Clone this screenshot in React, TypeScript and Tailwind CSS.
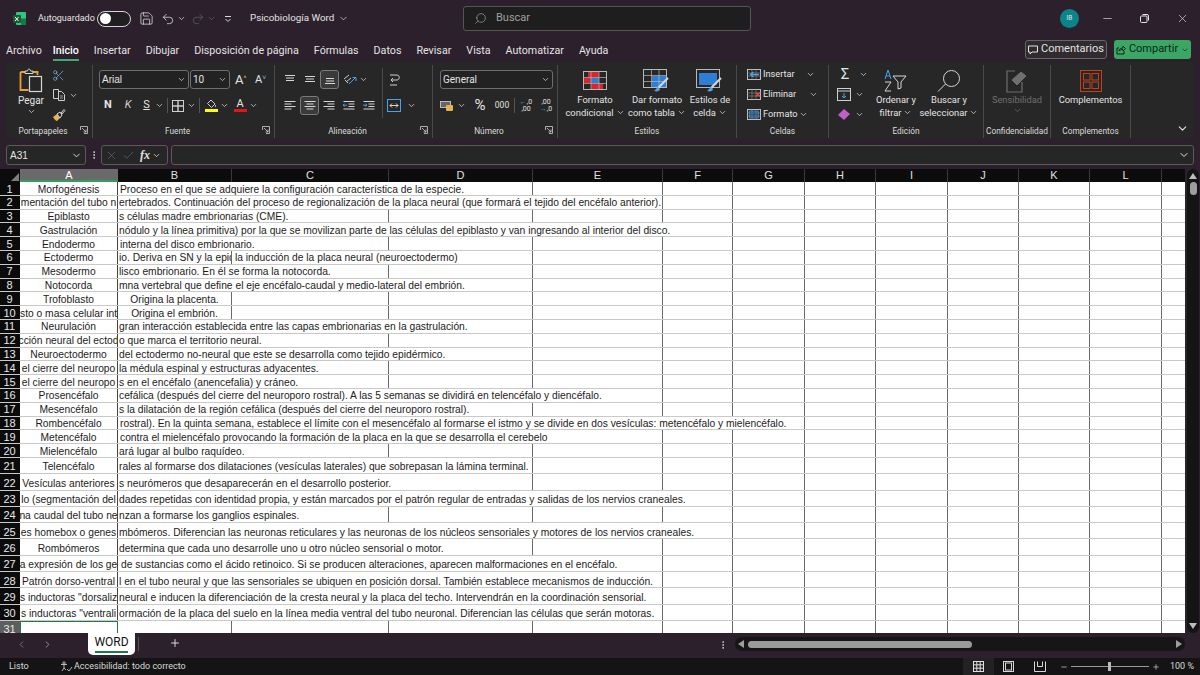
import React from "react";
import { ChevronDown, ChevronLeft, ChevronRight, Search, Minus, X, Undo2, Redo2, Save, Plus, Check, Scissors, MoreVertical } from "lucide-react";

const rows: { a: string; b: string; c?: string; center?: boolean; pl?: string }[] = [
  { a: "Morfogénesis", b: "Proceso en el que se adquiere la configuración característica de la especie.", pl: "pl-[2px]" },
  { a: "mentación del tubo n", b: "ertebrados. Continuación del proceso de regionalización de la placa neural (que formará el tejido del encéfalo anterior)." },
  { a: "Epiblasto", b: "s células madre embrionarias (CME)." },
  { a: "Gastrulación", b: "nódulo y la línea primitiva) por la que se movilizan parte de las células del epiblasto y van ingresando al interior del disco." },
  { a: "Endodermo", b: "interna del disco embrionario.", pl: "pl-[2px]" },
  { a: "Ectodermo", b: "io. Deriva en SN y la epid", c: "la inducción de la placa neural (neuroectodermo)" },
  { a: "Mesodermo", b: "lisco embrionario. En él se forma la notocorda." },
  { a: "Notocorda", b: "mna vertebral que define el eje encéfalo-caudal y medio-lateral del embrión." },
  { a: "Trofoblasto", b: "Origina la placenta.", center: true },
  { a: "sto o masa celular int", b: "Origina el embrión.", center: true },
  { a: "Neurulación", b: "gran interacción establecida entre las capas embrionarias en la gastrulación." },
  { a: "cción neural del ectod", b: "o que marca el territorio neural." },
  { a: "Neuroectodermo", b: "del ectodermo no-neural que este se desarrolla como tejido epidérmico." },
  { a: "el cierre del neuropo", b: "la médula espinal y estructuras adyacentes." },
  { a: "el cierre del neuropo", b: "s en el encéfalo (anencefalia) y cráneo." },
  { a: "Prosencéfalo", b: "cefálica (después del cierre del neuroporo rostral). A las 5 semanas se dividirá en telencéfalo y diencéfalo." },
  { a: "Mesencéfalo", b: "s la dilatación de la región cefálica (después del cierre del neuroporo rostral)." },
  { a: "Rombencéfalo", b: "rostral). En la quinta semana, establece el límite con el mesencéfalo al formarse el istmo y se divide en dos vesículas: metencéfalo y mielencéfalo.", pl: "pl-[2px]" },
  { a: "Metencéfalo", b: "contra el mielencéfalo provocando la formación de la placa en la que se desarrolla el cerebelo", pl: "pl-[2px]" },
  { a: "Mielencéfalo", b: "ará lugar al bulbo raquídeo." },
  { a: "Telencéfalo", b: "rales al formarse dos dilataciones (vesículas laterales) que sobrepasan la lámina terminal." },
  { a: "Vesículas anteriores", b: "s neurómeros que desaparecerán en el desarrollo posterior." },
  { a: "lo (segmentación del", b: "dades repetidas con identidad propia, y están marcados por el patrón regular de entradas y salidas de los nervios craneales." },
  { a: "na caudal del tubo ne", b: "nzan a formarse los ganglios espinales." },
  { a: "es homebox o genes", b: "mbómeros. Diferencian las neuronas reticulares y las neuronas de los núcleos sensoriales y motores de los nervios craneales." },
  { a: "Rombómeros", b: "determina que cada uno desarrolle uno u otro núcleo sensorial o motor." },
  { a: "a expresión de los ge", b: "de sustancias como el ácido retinoico. Si se producen alteraciones, aparecen malformaciones en el encéfalo.", pl: "pl-[3px]" },
  { a: "Patrón dorso-ventral", b: "l en el tubo neural y que las sensoriales se ubiquen en posición dorsal. También establece mecanismos de inducción." },
  { a: "s inductoras \"dorsaliz", b: "neural e inducen la diferenciación de la cresta neural y la placa del techo. Intervendrán en la coordinación sensorial." },
  { a: "s inductoras \"ventrali", b: "ormación de la placa del suelo en la línea media ventral del tubo neuronal. Diferencian las células que serán motoras." },
];

const columns: [string, string][] = [
  ["B", "w-[114px]"], ["C", "w-[157px]"], ["D", "w-[144px]"], ["E", "w-[130px]"], ["F", "w-[70px]"], ["G", "w-[72px]"],
  ["H", "w-[71px]"], ["I", "w-[72px]"], ["J", "w-[71px]"], ["K", "w-[71px]"], ["L", "w-[72px]"],
];
const restCols = columns.slice(2);

const ui = { fontFamily: 'Roboto, "Open Sans", sans-serif' };

function Chev({ className = "" }: { className?: string }) {
  return <ChevronDown size={9} strokeWidth={2} className={"text-[#d8d8d8] shrink-0 " + className} />;
}

function Launcher() {
  return (
    <svg width="8" height="8" viewBox="0 0 8 8" className="absolute right-[4px] bottom-[4px]" fill="none" stroke="#cfcfcf" strokeWidth="0.8">
      <path d="M.5 4V.5H7.5V7.5H4" /><path d="M2 2l4 4M6 3.500V6H3.500" />
    </svg>
  );
}

function Group({ w, label, launcher, children }: { w: string; label: string; launcher?: boolean; children: React.ReactNode }) {
  return (
    <div className={"relative h-full flex flex-col border-r border-[#4a4a4a] shrink-0 " + w}>
      <div className="flex-1 flex min-h-0">{children}</div>
      <div className={"h-[14px] text-center text-[8.300px] leading-[15px] text-[#dcdcdc] whitespace-nowrap shrink-0 " + (launcher ? "pr-[12px]" : "")}>{label}</div>
      {launcher && <Launcher />}
    </div>
  );
}

function AlignIcon({ kind }: { kind: "top" | "mid" | "bot" | "l" | "c" | "r" | "in" | "out" }) {
  const L: Record<string, string> = {
    top: "M2 2.500h10M3 5h8M3 7.500h8",
    mid: "M2 3.500h10M3 6h8M2 8.500h10",
    bot: "M3 5.500h8M3 8h8M2 10.500h10",
    l: "M1.500 2.500h11M1.500 5h7M1.500 7.500h11M1.500 10h7",
    c: "M1.500 2.500h11M3.500 5h7M1.500 7.500h11M3.500 10h7",
    r: "M1.500 2.500h11M5.500 5h7M1.500 7.500h11M5.500 10h7",
    in: "M1.500 2.500h11M6.500 5h6M6.500 7.500h6M1.500 10h11",
    out: "M1.500 2.500h11M6.500 5h6M6.500 7.500h6M1.500 10h11",
  };
  return (
    <svg width="14" height="13" viewBox="0 0 14 13" fill="none" stroke="#d6d6d6" strokeWidth="1">
      <path d={L[kind]} />
      {kind === "in" && <path d="M1 6.200h4M3.500 5L5 6.200 3.500 7.500" stroke="#4aa3e8" />}
      {kind === "out" && <path d="M5 6.200H1M2.500 5L1 6.200l1.500 1.300" stroke="#4aa3e8" />}
    </svg>
  );
}

function Paste() {
  return (
    <svg width="24" height="26" viewBox="0 0 24 26" fill="none">
      <path d="M1.500 5H6M14 5h4.500v3M1.500 5v18h8" stroke="#e8a03c" strokeWidth="1.800" />
      <path d="M6 6.500V4h2.500c0-2.500 3-2.500 3 0H14v2.500z" stroke="#d6d6d6" />
      <rect x="10.500" y="9.500" width="12" height="15" stroke="#d6d6d6" strokeWidth="1.200" fill="#272727" />
    </svg>
  );
}

function CopyIcon() {
  return (
    <svg width="14" height="14" viewBox="0 0 14 14" fill="none" stroke="#cfcfcf">
      <path d="M1.500 1.500h5v9h-5z" /><path d="M6.500 3.500h3l3 3v6h-6v-9z" fill="#272727" /><path d="M8 8h3M8 10h3" strokeWidth=".7" />
    </svg>
  );
}

function PainterIcon() {
  return (
    <svg width="14" height="14" viewBox="0 0 14 14" fill="none">
      <path d="M1 9l4-3 3 4-3 3c-1 0-3-2-4-4z" fill="#e5b350" />
      <path d="M5 6l3-2 2 3-2 3zM9 5l3-3.500 1 1-3 3.500z" stroke="#d6d6d6" />
    </svg>
  );
}

function MatrixIcon() {
  return (
    <svg width="14" height="14" viewBox="0 0 14 14" fill="none" stroke="#cfcfcf">
      <rect x="1.500" y="1.500" width="11" height="11" />
      <path d="M1.500 7h11M7 1.500v11" strokeWidth="1.400" />
    </svg>
  );
}

function CondFormat() {
  return (
    <svg width="24" height="20" viewBox="0 0 24 20">
      <rect x=".5" y=".5" width="23" height="18" fill="#272727" stroke="#b8b8b8" />
      <rect x="5" y="1" width="11" height="5.500" fill="#d8262c" />
      <rect x="1" y="7" width="7" height="5" fill="#d8262c" />
      <rect x="8" y="7" width="8" height="5" fill="#2d7fd6" />
      <rect x="8" y="12.500" width="12" height="5.500" fill="#d8262c" />
      <path d="M.5 6.500h23M.5 12.500h23M8 .5v18M16 .5v18" stroke="#b8b8b8" strokeWidth=".7" />
    </svg>
  );
}

function TableFormat({ cell = false }: { cell?: boolean }) {
  return (
    <svg width="28" height="24" viewBox="0 0 28 24" fill="none">
      <rect x=".5" y=".5" width="23" height="18" stroke="#b8b8b8" fill="#272727" />
      {cell ? <rect x="3" y="4" width="18" height="12" fill="#2d7fd6" /> : <rect x="9" y="7" width="14" height="11" fill="#2d7fd6" />}
      {!cell && <path d="M.5 6.500h23M.5 12.500h23M8.500.5v18M16 .5v18" stroke="#b8b8b8" strokeWidth=".7" />}
      <path d="M25 9L15 19" stroke="#d6d6d6" strokeWidth="2.200" />
      <path d="M15 18c-2 1-2 3-4 4 3 1 6 0 6-2z" fill="#5aa0dc" />
    </svg>
  );
}

function CellIcon({ kind }: { kind: "ins" | "del" | "fmt" }) {
  return (
    <svg width="14" height="13" viewBox="0 0 14 13" fill="none">
      <rect x=".5" y="1.500" width="13" height="10" stroke="#cfcfcf" strokeWidth=".9" />
      <path d="M.5 5h13M.5 8h13M5 1.500v10M9 1.500v10" stroke="#8f8f8f" strokeWidth=".6" />
      {kind === "ins" && <path d="M4 6.500h8M6.500 4L3.500 6.500 6.500 9" stroke="#4aa3e8" strokeWidth="1.300" />}
      {kind === "del" && <path d="M9 4.500l4 4M13 4.500l-4 4" stroke="#e5483f" strokeWidth="1.300" />}
      {kind === "fmt" && <rect x="2.500" y="3" width="9" height="7" fill="#2d7fd6" fillOpacity=".45" stroke="#4aa3e8" strokeWidth=".6" />}
    </svg>
  );
}

function SmallBtn({ icon, label, chev }: { icon: React.ReactNode; label: string; chev: string }) {
  return (
    <div className="h-[20px] flex items-center shrink-0">
      <span className="w-[14px] flex justify-center shrink-0">{icon}</span>
      <span className="ml-[2px] w-[35px] text-[9.200px] text-[#e4e4e4] leading-none whitespace-nowrap">{label}</span>
      <Chev className={chev} />
    </div>
  );
}

function LargeBtn({ w, icon, l1, l2, chev = true }: { w: string; icon: React.ReactNode; l1: string; l2: string; chev?: boolean }) {
  return (
    <div className={"flex flex-col items-center shrink-0 " + w}>
      <div className="h-[28px] flex items-center justify-center pt-[4px] shrink-0">{icon}</div>
      <div className="text-[9.400px] leading-[13px] text-[#e4e4e4] whitespace-nowrap text-center shrink-0">{l1}</div>
      <div className="text-[9.400px] leading-[13px] text-[#e4e4e4] whitespace-nowrap flex items-center gap-[2px] shrink-0">{l2}{chev && <Chev />}</div>
    </div>
  );
}

function Ribbon() {
  return (
    <div className="mx-[6px] h-[77px] bg-[#272727] rounded-[5px] flex text-[#e4e4e4] pt-[3px] pb-[1px]">
      <Group w="w-[87px]" label="Portapapeles" launcher>
        <div className="w-[50px] flex flex-col items-center shrink-0">
          <div className="h-[28px] flex items-end shrink-0"><Paste /></div>
          <div className="text-[10px] leading-[13px] mt-[1px] shrink-0">Pegar</div>
          <Chev />
        </div>
        <div className="flex flex-col -ml-[4px]">
          <div className="h-[20px] flex items-center shrink-0"><Scissors size={13} color="#7fb3e0" strokeWidth={1.300} /></div>
          <div className="h-[20px] flex items-center gap-[3px] shrink-0"><CopyIcon /><Chev /></div>
          <div className="h-[20px] flex items-center shrink-0"><PainterIcon /></div>
        </div>
      </Group>

      <Group w="w-[182px]" label="Fuente" launcher>
        <div className="flex flex-col pl-[6px]">
          <div className="flex items-center h-[25px] pt-[4px] shrink-0">
            <div className="w-[90px] h-[19px] rounded-[3px] border border-[#6e6e6e] bg-[#222] flex items-center justify-between px-[2px] text-[10px]" style={{ fontFamily: '"Liberation Sans", sans-serif' }}>Arial<Chev /></div>
            <div className="ml-[1px] w-[40px] h-[19px] rounded-[3px] border border-[#6e6e6e] bg-[#222] flex items-center justify-between px-[2px] text-[10px]">10<Chev /></div>
            <span className="ml-[5px] text-[13px] leading-none w-[20px]">A<sup className="text-[7px] text-[#bbb]">^</sup></span>
            <span className="text-[11px] leading-none w-[16px]">A<sup className="text-[7px] text-[#7fb3e0]">˅</sup></span>
          </div>
          <div className="flex items-center h-[31px] text-[11px] shrink-0">
            <span className="w-[20px] ml-[-1px] text-center font-bold">N</span>
            <span className="w-[20px] text-center italic text-[#d0d0d0]">K</span>
            <span className="w-[17px] text-center underline">S</span>
            <Chev />
            <span className="w-px h-[15px] bg-[#555] ml-[3px] mr-[3px]" />
            <MatrixIcon />
            <Chev className="ml-[2px]" />
            <span className="w-px h-[15px] bg-[#555] ml-[3px] mr-[4px]" />
            <span className="w-[14px] flex flex-col items-center">
              <svg width="11" height="10" viewBox="0 0 11 10" fill="none" stroke="#cfcfcf"><path d="M5 1l4 4-3.500 3.500-4-4z" /><path d="M9.500 6v2" stroke="#7fb3e0" /></svg>
              <span className="w-[13px] h-[3px] bg-[#ffff00]" />
            </span>
            <Chev className="ml-[2px]" />
            <span className="w-[14px] ml-[4px] flex flex-col items-center text-[11px] leading-[10px]">A<span className="w-[13px] h-[3px] bg-[#e8121c]" /></span>
            <Chev className="ml-[2px]" />
          </div>
        </div>
      </Group>

      <Group w="w-[158px]" label="Alineación" launcher>
        <div className="flex flex-col pl-[8px]">
          <div className="flex items-center h-[25px] pt-[4px] gap-[6px] shrink-0">
            <AlignIcon kind="top" /><AlignIcon kind="mid" />
            <span className="w-[19px] h-[19px] -ml-[3px] flex items-center justify-center rounded-[3px] border border-[#7a7a7a] bg-[#3a3a3a]"><AlignIcon kind="bot" /></span>
            <svg width="14" height="14" viewBox="0 0 14 14" fill="none" className="-ml-[2px]"><path d="M1 6l5-4M3 9l5-4M2 7l3 3" stroke="#cfcfcf" /><path d="M6 11l6-6M9.500 4.500H13V8" stroke="#4aa3e8" /></svg>
            <Chev className="-ml-[4px]" />
          </div>
          <div className="flex items-center h-[31px] gap-[6px] shrink-0">
            <AlignIcon kind="l" />
            <span className="w-[19px] h-[19px] -mx-[3px] flex items-center justify-center rounded-[3px] border border-[#7a7a7a] bg-[#3a3a3a]"><AlignIcon kind="c" /></span>
            <AlignIcon kind="r" /><AlignIcon kind="out" /><AlignIcon kind="in" />
          </div>
        </div>
        <span className="w-px h-[50px] bg-[#4a4a4a] ml-[6px] mt-[3px]" />
        <div className="flex flex-col pl-[4px]">
          <div className="h-[25px] flex items-center pt-[4px] shrink-0">
            <svg width="14" height="14" viewBox="0 0 14 14" fill="none" stroke="#cfcfcf"><path d="M3 2h7c3 0 3 5 0 5H5M6 5L4 7l2 2" /><path d="M3 12h7" /></svg>
          </div>
          <div className="h-[31px] flex items-center gap-[6px] shrink-0">
            <svg width="14" height="13" viewBox="0 0 14 13" fill="none"><rect x=".5" y=".5" width="13" height="12" stroke="#4aa3e8" /><path d="M3 6.500h8M9 4.500l2 2-2 2M5 4.500l-2 2 2 2" stroke="#d6d6d6" /></svg>
            <Chev />
          </div>
        </div>
      </Group>

      <Group w="w-[125px]" label="Número" launcher>
        <div className="flex flex-col pl-[7px]">
          <div className="flex items-center h-[25px] pt-[4px] shrink-0">
            <div className="w-[113px] h-[19px] rounded-[3px] border border-[#6e6e6e] bg-[#222] flex items-center justify-between px-[2px] text-[10px]">General<Chev /></div>
          </div>
          <div className="flex items-center h-[31px] shrink-0">
            <svg width="14" height="12" viewBox="0 0 14 12" fill="none"><rect x=".5" y="1.500" width="10" height="6" fill="#666" stroke="#bbb" /><rect x="6" y="5" width="7" height="6" rx="1" fill="#e5b350" /></svg>
            <Chev className="ml-[3px]" />
            <span className="ml-[6px] text-[15px] leading-none w-[16px] text-center">%</span>
            <span className="ml-[5px] text-[8.500px] leading-none w-[18px] text-center">000</span>
            <span className="w-px h-[15px] bg-[#555] ml-[3px] mr-[4px]" />
            <span className="w-[14px] text-[7px] leading-[7px] text-center"><span className="text-[#4aa3e8]">←</span>,0<br />,00</span>
            <span className="w-[14px] ml-[6px] text-[7px] leading-[7px] text-center">,00<br /><span className="text-[#4aa3e8]">→</span>,0</span>
          </div>
        </div>
      </Group>

      <Group w="w-[179px]" label="Estilos">
        <LargeBtn w="w-[74px]" icon={<CondFormat />} l1="Formato" l2="condicional" />
        <LargeBtn w="w-[50px]" icon={<TableFormat />} l1="Dar formato" l2="como tabla" />
        <LargeBtn w="w-[56px]" icon={<TableFormat cell />} l1="Estilos de" l2="celda" />
      </Group>

      <Group w="w-[92px]" label="Celdas">
        <div className="flex flex-col pl-[10px] -mt-[1px]">
          <SmallBtn icon={<CellIcon kind="ins" />} label="Insertar" chev="ml-[8px]" />
          <SmallBtn icon={<CellIcon kind="del" />} label="Eliminar" chev="ml-[11px]" />
          <SmallBtn icon={<CellIcon kind="fmt" />} label="Formato" chev="ml-[1px]" />
        </div>
      </Group>

      <Group w="w-[155px]" label="Edición">
        <div className="flex flex-col pl-[8px] w-[43px] shrink-0 -mt-[1px]">
          <div className="h-[20px] flex items-center text-[15px] leading-none shrink-0"><span className="w-[16px] text-center">Σ</span><Chev className="ml-[6px]" /></div>
          <div className="h-[20px] flex items-center shrink-0">
            <svg width="14" height="13" viewBox="0 0 14 13" fill="none"><rect x=".5" y=".5" width="13" height="12" stroke="#cfcfcf" /><path d="M.5 3h13" stroke="#cfcfcf" /><path d="M7 5v5M5 8l2 2 2-2" stroke="#4aa3e8" /></svg>
            <Chev className="ml-[4px]" />
          </div>
          <div className="h-[20px] flex items-center shrink-0">
            <svg width="14" height="13" viewBox="0 0 14 13"><path d="M1 7l6-6 6 5-6 6z" fill="#c15fc9" /></svg>
            <Chev className="ml-[4px]" />
          </div>
        </div>
        <LargeBtn w="w-[48px]" icon={<svg width="24" height="24" viewBox="0 0 24 24" fill="none"><path d="M1 10l3-9 3 9M2 7h4" stroke="#4aa3e8" /><path d="M1 13h6l-6 9h6" stroke="#d6d6d6" /><path d="M9 7h13l-5 6v6l-3 1v-7z" stroke="#d6d6d6" /></svg>} l1="Ordenar y" l2="filtrar" />
        <LargeBtn w="w-[58px]" icon={<svg width="24" height="24" viewBox="0 0 24 24" fill="none" stroke="#d6d6d6"><circle cx="14.500" cy="9.500" r="8" /><path d="M8.500 15L1 22.500" /></svg>} l1="Buscar y" l2="seleccionar" />
      </Group>

      <Group w="w-[67px]" label="Confidencialidad">
        <div className="flex flex-col items-center w-full text-[#6f6f6f]">
          <div className="h-[28px] flex items-center pt-[4px] shrink-0">
            <svg width="22" height="23" viewBox="0 0 22 23" fill="none" stroke="#6f6f6f"><path d="M9 1H1v21h15V12" strokeWidth="1.200" /><path d="M6 10l9-8 5 4-9 9z" fill="#6f6f6f" /></svg>
          </div>
          <div className="text-[9.300px] leading-[13px] shrink-0">Sensibilidad</div>
          <ChevronDown size={9} strokeWidth={2} className="shrink-0" />
        </div>
      </Group>

      <Group w="w-[80px]" label="Complementos">
        <div className="flex flex-col items-center w-full">
          <div className="h-[28px] flex items-center pt-[4px] shrink-0">
            <svg width="22" height="22" viewBox="0 0 22 22" fill="none" stroke="#c4401c"><rect x=".5" y=".5" width="21" height="21" /><rect x="3.500" y="3.500" width="6.500" height="6.500" /><rect x="12" y="3.500" width="6.500" height="6.500" /><rect x="3.500" y="12" width="6.500" height="6.500" /><rect x="12" y="12" width="6.500" height="6.500" /></svg>
          </div>
          <div className="text-[9.400px] leading-[13px] shrink-0">Complementos</div>
        </div>
      </Group>

      <div className="flex-1 flex items-end justify-end pr-[5px] pb-[3px]"><ChevronDown size={13} color="#e4e4e4" /></div>
    </div>
  );
}

function TitleBar() {
  return (
    <div className="h-[37px] flex items-center text-[#e4e4e4]">
      <div className="w-[38px] flex justify-center shrink-0">
        <svg width="13" height="13" viewBox="0 0 13 13"><rect x="3" y="0" width="10" height="13" rx="1" fill="#33c481" /><rect x="8" y="6.500" width="5" height="6.500" fill="#107c41" /><rect x="0" y="3" width="8" height="8" rx="1" fill="#185c37" /><path d="M2 5l3.500 4M5.500 5L2 9" stroke="#fff" /></svg>
      </div>
      <span className="text-[9px] w-[59px] shrink-0 whitespace-nowrap">Autoguardado</span>
      <div className="w-[34px] h-[16px] rounded-full border border-[#d6d6d6] bg-[#1f1f1f] flex items-center px-[2px] shrink-0">
        <span className="w-[11px] h-[11px] rounded-full bg-white" />
      </div>
      <Save size={15} strokeWidth={1.200} className="ml-[8px] shrink-0" />
      <Undo2 size={14} strokeWidth={1.300} className="ml-[7px] shrink-0" />
      <Chev className="ml-[2px]" />
      <Redo2 size={14} strokeWidth={1.200} color="#666" className="ml-[5px] shrink-0" />
      <ChevronDown size={9} color="#666" className="ml-[2px] shrink-0" />
      <svg width="8" height="8" viewBox="0 0 8 8" className="ml-[8px] shrink-0" fill="none" stroke="#d8d8d8"><path d="M1 1.500h6M1.500 4l2.500 2.500L6.500 4" /></svg>
      <span className="ml-[18px] text-[9.800px] w-[97px] shrink-0 flex items-center gap-[4px] whitespace-nowrap">Psicobiología&nbsp;Word <ChevronDown size={11} strokeWidth={1.500} className="shrink-0" /></span>
      <div className="ml-[116px] w-[288px] h-[25px] rounded-[3px] border border-[#555] bg-[#1e1e1e] flex items-center shrink-0 pl-[10px]">
        <Search size={13} strokeWidth={1.200} color="#a8a8a8" className="-scale-x-100" />
        <span className="ml-[9px] text-[11px] text-[#a0a0a0]">Buscar</span>
      </div>
      <div className="ml-[309px] w-[19px] h-[19px] rounded-full bg-[#0b858c] flex items-center justify-center text-[6.500px] shrink-0">IB</div>
      <Minus size={13} strokeWidth={1.200} className="ml-[22px] shrink-0" />
      <svg width="11" height="11" viewBox="0 0 11 11" className="ml-[25px] shrink-0" fill="none" stroke="#e4e4e4"><rect x="1.500" y="3" width="6.500" height="6.500" rx="1" /><path d="M3.500 1.500h4.500a1.500 1.500 0 0 1 1.500 1.500V7.500" /></svg>
      <X size={13} strokeWidth={1.200} className="ml-[26px] shrink-0" />
    </div>
  );
}

function Tabs() {
  const tabs = ["Archivo", "Inicio", "Insertar", "Dibujar", "Disposición de página", "Fórmulas", "Datos", "Revisar", "Vista", "Automatizar", "Ayuda"];
  return (
    <div className="h-[25px] flex items-center pl-[6px] pr-[9px] text-[#e4e4e4]">
      <div className="flex gap-[15px] text-[10.700px] flex-1 pt-[3px]">
        {tabs.map((t) => (
          <span key={t} className={t === "Inicio" ? "relative font-medium text-white -ml-[4px]" : ""}>
            {t}
            {t === "Inicio" && <span className="absolute left-0 right-0 -bottom-[2px] h-[2px] bg-[#3fae6c]" />}
          </span>
        ))}
      </div>
      <div className="w-[82px] h-[19px] rounded-[3px] border border-[#666] bg-[#2f2b2f] flex items-center justify-center gap-[3px] text-[11px]">
        <svg width="10" height="10" viewBox="0 0 10 10" fill="none" stroke="#e4e4e4"><path d="M.5 1h9v6H4L2 9V7H.5z" /></svg>
        Comentarios
      </div>
      <div className="ml-[7px] w-[77px] h-[19px] rounded-[3px] bg-[#3aa864] text-[#10231a] flex items-center justify-center gap-[3px] text-[11px]">
        <svg width="10" height="10" viewBox="0 0 10 10" fill="none" stroke="#10231a"><path d="M8 6v3H1V3h2M3 6c0-2 2-3 4-3V1l2.500 2.500L7 6V4.500C5 4.500 4 5 3 6z" /></svg>
        Compartir
        <ChevronDown size={8} />
      </div>
    </div>
  );
}

function FormulaBar() {
  return (
    <div className="h-[20px] mt-[6px] mx-[6px] flex items-stretch text-[#e4e4e4]">
      <div className="w-[80px] rounded-[3px] border border-[#5a5a5a] bg-[#262626] flex items-center justify-between pl-[3px] pr-[3px] text-[10px]" style={{ fontFamily: '"Liberation Sans", sans-serif' }}>A31<ChevronDown size={11} /></div>
      <div className="w-[15px] flex items-center justify-center"><MoreVertical size={10} /></div>
      <div className="w-[67px] rounded-[3px] border border-[#5a5a5a] bg-[#262626] flex items-center pl-[3px] gap-[4px]">
        <X size={13} strokeWidth={1} color="#777" />
        <Check size={13} strokeWidth={1} color="#777" />
        <span className="ml-[1px] italic font-bold text-[12px] leading-none" style={{ fontFamily: '"Liberation Serif", serif' }}>fx</span>
        <ChevronDown size={9} className="-ml-[2px]" />
      </div>
      <div className="ml-[3px] flex-1 rounded-[3px] border border-[#5a5a5a] bg-[#262626] flex items-center justify-end pr-[3px]"><ChevronDown size={12} /></div>
    </div>
  );
}

function Cell({ w, children, className = "" }: { w: string; children?: React.ReactNode; className?: string }) {
  return <div className={"h-full shrink-0 border-r box-border " + w + " " + className}>{children}</div>;
}

function Row({ n, r, i }: { n: number; r: (typeof rows)[number]; i: number }) {
  const short = i < 20;
  const pad = short ? "pt-[1.500px]" : "pt-[3.500px]";
  const fill = short ? "h-[12.800px]" : "h-[15.300px]";
  const text = "relative z-10 bg-white whitespace-nowrap leading-[11px] block w-max " + pad + " " + fill;
  return (
    <div className={"flex shrink-0 border-b border-[#c9c9c9] box-border " + (short ? "h-[13.800px]" : "h-[16.300px]")}>
      <div className={"w-[20px] shrink-0 bg-[#0b0b0b] text-[#e8e8e8] text-center text-[11px] leading-[11px] pr-[1px] relative z-20 " + pad}>{n}</div>
      <Cell w="w-[98px]" className={"overflow-hidden flex justify-center border-[#444] " + pad}><span className="shrink-0 whitespace-nowrap leading-[11px]">{r.a}</span></Cell>
      <Cell w="w-[114px]" className={"border-[#6a6a6a]" + (r.c ? " overflow-hidden" : "")}>
        {r.center
          ? <span className={"block text-center leading-[11px] whitespace-nowrap " + pad}>{r.b}</span>
          : <span className={text + " " + (r.pl ?? "pl-[1px]")}>{r.b}</span>}
      </Cell>
      <Cell w="w-[157px]" className="border-[#6a6a6a]">{r.c && <span className={text + " pl-[3px]"}>{r.c}</span>}</Cell>
      {restCols.map(([k, w]) => <Cell key={k} w={w} className="border-[#6a6a6a]" />)}
      <div className="w-[23px] shrink-0" />
    </div>
  );
}

function Sheet() {
  return (
    <div className="mt-[4px] h-[464px] flex overflow-hidden text-[10.280px] text-[#1b1b1b]" style={{ fontFamily: '"Liberation Sans", sans-serif' }}>
      <div className="w-[1185px] shrink-0 bg-white flex flex-col">
        <div className="h-[13px] flex bg-[#0c0c0c] text-[#e0e0e0] text-[11px] shrink-0">
          <div className="w-[20px] shrink-0 flex items-end justify-end pr-[1px] pb-[1px]">
            <svg width="8" height="8" viewBox="0 0 8 8"><path d="M8 0v8H0z" fill="#7d7d7d" /></svg>
          </div>
          <div className="w-[98px] shrink-0 bg-[#6a6a6a] border-b-2 border-[#2f9e5f] text-center leading-[12px] text-white">A</div>
          {columns.map(([k, w]) => (
            <div key={k} className={"shrink-0 text-center leading-[13px] border-r border-[#3a3a3a] " + w}>{k}</div>
          ))}
        </div>
        {rows.map((r, i) => <Row key={i} n={i + 1} r={r} i={i} />)}
        <div className="flex flex-1 min-h-0">
          <div className="w-[20px] shrink-0 bg-[#5e5e5e] text-[#e8e8e8] text-center text-[11px] leading-[16px] pr-[1px]">31</div>
          <div className="w-[98px] shrink-0 h-[14px] border-x-[1.500px] border-t-[1.500px] border-[#1f7a45]" />
          <Cell w="w-[114px]" className="border-[#6a6a6a]" />
          <Cell w="w-[157px]" className="border-[#6a6a6a]" />
          {restCols.map(([k, w]) => <Cell key={k} w={w} className="border-[#6a6a6a]" />)}
        </div>
      </div>
      <div className="flex-1 pl-[2px] pr-[1px] bg-[#2b202b]">
        <div className="h-full bg-[#141414] rounded-full flex flex-col items-center justify-between py-[4px]">
          <div className="flex flex-col items-center">
            <svg width="8" height="6" viewBox="0 0 8 6"><path d="M4 0l4 6H0z" fill="#bdbdbd" /></svg>
            <span className="w-[7px] h-[13px] rounded-full bg-[#9e9e9e] mt-[3px]" />
          </div>
          <svg width="8" height="6" viewBox="0 0 8 6"><path d="M4 6L0 0h8z" fill="#bdbdbd" /></svg>
        </div>
      </div>
    </div>
  );
}

function SheetTabs() {
  return (
    <div className="h-[25px] flex text-[#d8d8d8]">
      <div className="w-[88px] flex items-center pl-[16px] gap-[15px] shrink-0 pb-[3px]">
        <ChevronLeft size={11} color="#777" /><ChevronRight size={11} color="#999" />
      </div>
      <div className="w-[47px] h-[22px] bg-white rounded-b-[5px] text-[#111] text-[12px] flex flex-col items-center shrink-0 pt-[2px] leading-[15px]">
        <span>WORD</span>
        <span className="w-[33px] h-[1.500px] bg-[#1f7a45] mt-[1px]" />
      </div>
      <span className="w-px h-[14px] bg-[#555] ml-[3px] mt-[4px]" />
      <Plus size={12} className="ml-[30px] mt-[4px]" />
      <MoreVertical size={10} className="ml-[537px] mt-[7px]" />
      <div className="ml-[7px] mt-[4px] w-[450px] h-[14px] rounded-full bg-[#161616] flex items-center px-[3px]">
        <svg width="6" height="8" viewBox="0 0 6 8"><path d="M0 4l6-4v8z" fill="#9e9e9e" /></svg>
        <span className="ml-[4px] w-[224px] h-[7px] rounded-full bg-[#9a9a9a]" />
        <span className="flex-1" />
        <svg width="6" height="8" viewBox="0 0 6 8"><path d="M6 4L0 0v8z" fill="#9e9e9e" /></svg>
      </div>
    </div>
  );
}

function StatusBar() {
  return (
    <div className="h-[17px] bg-[#141414] flex items-center text-[9px] text-[#d8d8d8] pl-[9px]">
      <span className="w-[51px] shrink-0">Listo</span>
      <svg width="13" height="12" viewBox="0 0 13 12" fill="none" stroke="#d8d8d8" strokeWidth=".8" className="shrink-0"><circle cx="4" cy="2" r="1.200" /><path d="M1 3.500h6M4 4v3l-2 3M4 7l2 2M7 8l2 2 3-4" /></svg>
      <span className="ml-[1px] whitespace-nowrap">Accesibilidad: todo correcto</span>
      <span className="flex-1" />
      <div className="w-[31px] h-full bg-[#222] flex items-center justify-center shrink-0 mr-[-1px]">
        <svg width="11" height="11" viewBox="0 0 11 11" fill="none" stroke="#e0e0e0"><rect x=".5" y=".5" width="10" height="10" /><path d="M.5 3.800h10M.5 7.200h10M3.800.5v10M7.200.5v10" /></svg>
      </div>
      <svg width="11" height="11" viewBox="0 0 11 11" fill="none" stroke="#d8d8d8" className="ml-[10px] shrink-0"><rect x=".5" y=".5" width="10" height="10" /><rect x="2.500" y="2" width="6" height="7" /></svg>
      <svg width="12" height="11" viewBox="0 0 12 11" fill="none" stroke="#d8d8d8" className="ml-[20px] shrink-0"><path d="M.5 .5v10h11V.5M3.500 .5v5h5V.5" /></svg>
      <Minus size={8} className="ml-[14px] shrink-0" />
      <div className="ml-[3px] w-[78px] h-[1px] bg-[#999] relative shrink-0">
        <span className="absolute left-[37px] -top-[4px] w-[3px] h-[9px] bg-[#bbb]" />
      </div>
      <Plus size={8} className="ml-[3px] shrink-0" />
      <span className="ml-[10px] mr-[6px] whitespace-nowrap">100 %</span>
    </div>
  );
}

export default function App() {
  return (
    <div className="w-[1200px] h-[675px] overflow-hidden bg-[#2b202b] flex flex-col" style={ui}>
      <TitleBar />
      <Tabs />
      <Ribbon />
      <FormulaBar />
      <Sheet />
      <SheetTabs />
      <StatusBar />
    </div>
  );
}
